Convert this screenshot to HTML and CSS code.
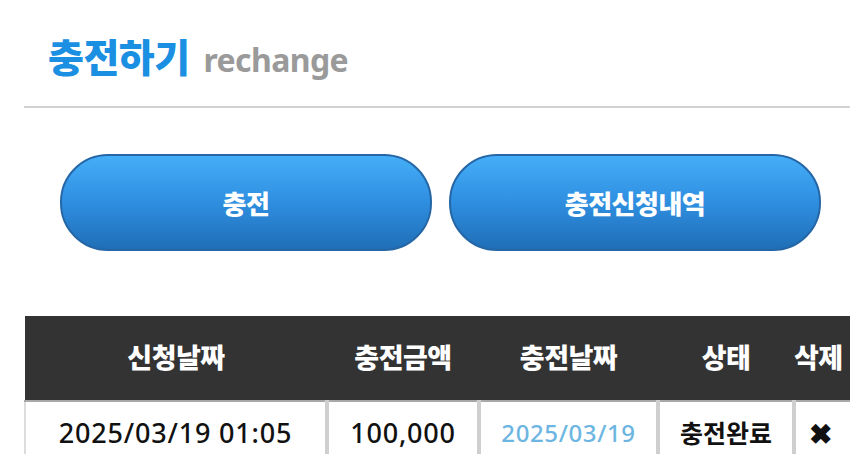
FILE: index.html
```html
<!DOCTYPE html>
<html lang="ko">
<head>
<meta charset="utf-8">
<link rel="stylesheet" href="styles.css">
</head>
<body>
<div class="page">
  <h1 class="title"><span class="title-ko">충전하기</span><span class="title-en">rechange</span></h1>
  <div class="divider"></div>
  <div class="buttons">
    <button class="btn">충전</button>
    <button class="btn">충전신청내역</button>
  </div>
  <table class="list">
    <colgroup>
      <col class="c1"><col class="c2"><col class="c3"><col class="c4"><col class="c5">
    </colgroup>
    <thead>
      <tr><th>신청날짜</th><th>충전금액</th><th>충전날짜</th><th>상태</th><th>삭제</th></tr>
    </thead>
    <tbody>
      <tr>
        <td class="num">2025/03/19 01:05</td>
        <td class="num">100,000</td>
        <td class="num done-date">2025/03/19</td>
        <td class="state">충전완료</td>
        <td class="del">✖</td>
      </tr>
    </tbody>
  </table>
</div>
</body>
</html>
```

FILE: styles.css
```css
html, body {
  margin: 0;
  padding: 0;
  background: #ffffff;
  overflow: hidden;
}
.page {
  width: 850px;
  height: 454px;
  overflow: hidden;
  font-family: "Noto Sans CJK KR", "Noto Sans", sans-serif;
}
.title {
  margin: 0;
  padding: 36px 0 0 48px;
  height: 80px;
  box-sizing: border-box;
  display: flex;
  align-items: baseline;
  gap: 14px;
  line-height: 1;
}
.title-ko {
  font-size: 39px;
  font-weight: 900;
  color: #1b8fe2;
  letter-spacing: -0.5px;
}
.title-en {
  font-family: "Noto Sans", sans-serif;
  font-size: 32px;
  font-weight: 700;
  color: #9a9a9a;
  letter-spacing: -0.6px;
}
.divider {
  margin: 26px 0 0 24px;
  height: 2px;
  background: #d2d2d2;
}
.buttons {
  display: flex;
  gap: 17px;
  padding: 46px 0 0 60px;
}
.btn {
  width: 372px;
  height: 97px;
  border-radius: 48px;
  border: 2px solid #2567a6;
  background: linear-gradient(to bottom, #45aef8 0%, #2f8ee0 50%, #1f6fb7 100%);
  color: #ffffff;
  font-family: "Noto Sans CJK KR", sans-serif;
  font-size: 26px;
  font-weight: 900;
  letter-spacing: -0.5px;
  padding: 0;
}
.list {
  margin: 65px 0 0 24px;
  border-collapse: collapse;
  table-layout: fixed;
  width: 826px;
}
.c1 { width: 302px; }
.c2 { width: 152px; }
.c3 { width: 179px; }
.c4 { width: 136px; }
.c5 { width: 57px; }
.list th {
  background: #333333;
  color: #ffffff;
  height: 80px;
  font-size: 27px;
  font-weight: 900;
  letter-spacing: -0.5px;
  padding: 0 0 4px;
  border-bottom: 2px solid #a8a8a8;
  white-space: nowrap;
}
.list th:last-child {
  text-align: left;
  padding-left: 0;
}
.list td {
  height: 60px;
  border: 4px solid #cfcfcf;
  border-top: none;
  text-align: center;
  font-size: 25px;
  font-weight: 500;
  color: #111111;
  padding: 0 0 4px;
  vertical-align: middle;
  white-space: nowrap;
}
.list td.num {
  font-family: "Noto Sans", sans-serif;
  font-size: 27px;
  letter-spacing: 0.8px;
}
.list td.state {
  font-weight: 700;
}
.list td:first-child {
  border-left: 2px solid #dcdcdc;
}
.list td:last-child {
  border-right: none;
}
.list td.done-date {
  font-size: 24px;
  letter-spacing: 0.6px;
  color: #6db6e2;
}
.list td.del {
  text-align: left;
  padding-left: 13px;
  font-size: 28px;
  font-weight: 900;
}
```
